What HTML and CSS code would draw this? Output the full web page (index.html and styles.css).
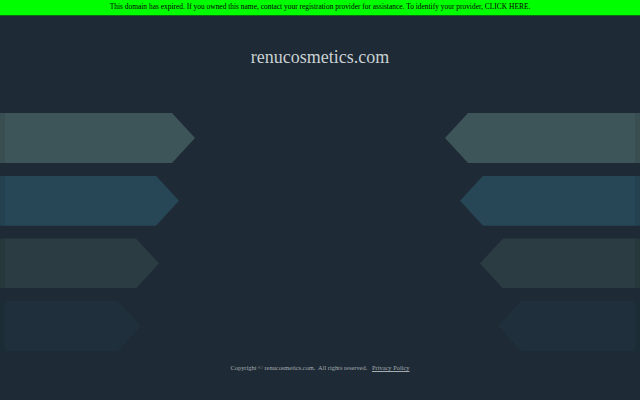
FILE: index.html
```html
<!DOCTYPE html>
<html>
<head>
<meta charset="utf-8">
<link rel="stylesheet" href="styles.css">
</head>
<body>
<div class="topbar">This domain has expired. If you owned this name, contact your registration provider for assistance. To identify your provider, <span class="click">CLICK HERE</span>.</div>
<h1 class="title">renucosmetics.com</h1>
<div class="arrows">
  <div class="side left">
    <div class="arr a1"></div>
    <div class="arr a2"></div>
    <div class="arr a3"></div>
    <div class="arr a4"></div>
  </div>
  <div class="side right">
    <div class="arr a1"></div>
    <div class="arr a2"></div>
    <div class="arr a3"></div>
    <div class="arr a4"></div>
  </div>
</div>
<div class="footer">Copyright © renucosmetics.com.&nbsp; All rights reserved.&nbsp;&nbsp; <a class="privacy" href="#">Privacy Policy</a></div>
</body>
</html>
```
FILE: styles.css
```css
html, body {
  margin: 0;
  padding: 0;
  background: #1e2a35;
  width: 640px;
  height: 400px;
  overflow: hidden;
  font-family: "Liberation Serif", "DejaVu Serif", serif;
}
.topbar {
  height: 15px;
  line-height: 14px;
  background: #00fd00;
  border-bottom: 1px solid #0f6a14;
  color: #000;
  font-size: 7.45px;
  text-align: center;
}
.title {
  margin: 30px 0 0 0;
  height: 22px;
  line-height: 22px;
  font-weight: normal;
  font-size: 18px;
  color: #c9d1d3;
  text-align: center;
}
.arrows {
  margin-top: 45px;
  display: flex;
  justify-content: space-between;
}
.side {
  display: flex;
  flex-direction: column;
  gap: 12.7px;
}
.left { align-items: flex-start; }
.right { align-items: flex-end; }
.arr {
  height: 50px;
}
.left .arr {
  clip-path: polygon(0 0, calc(100% - 23px) 0, 100% 50%, calc(100% - 23px) 100%, 0 100%);
  box-shadow: inset 5px 0 0 rgba(0,0,0,0.08);
}
.right .arr {
  clip-path: polygon(23px 0, 100% 0, 100% 100%, 23px 100%, 0 50%);
  box-shadow: inset -5px 0 0 rgba(0,0,0,0.08);
}
.a1 { background: #3d5558; }
.a2 { background: #284756; }
.a3 { background: #2b3d43; }
.a4 { background: #1f303c; }
.left .a1 { width: 195px; }
.left .a2 { width: 179px; }
.left .a3 { width: 159px; }
.left .a4 { width: 141px; }
.right .a1 { width: 195px; }
.right .a2 { width: 180px; }
.right .a3 { width: 160px; }
.right .a4 { width: 142px; }
.footer {
  margin-top: 13px;
  text-align: center;
  font-size: 6.4px;
  color: #a4acb0;
}
.privacy {
  color: #a4acb0;
  text-decoration: underline;
}
```
